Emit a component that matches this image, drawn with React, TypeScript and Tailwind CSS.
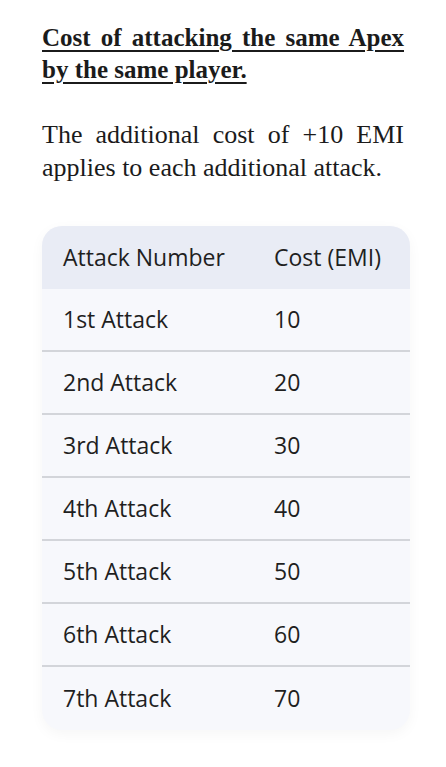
export default function App() {
  const rows = [
    ["1st Attack", "10"],
    ["2nd Attack", "20"],
    ["3rd Attack", "30"],
    ["4th Attack", "40"],
    ["5th Attack", "50"],
    ["6th Attack", "60"],
    ["7th Attack", "70"],
  ];

  return (
    <div className="min-h-[767px] bg-white px-[42px] pt-[22px] text-[#1b1b1b]">
      <h1 className="font-['Liberation_Serif',serif] text-[25px] font-bold leading-[32px] underline decoration-2 underline-offset-[4px]">
        <span className="block text-justify [text-align-last:justify]">Cost of attacking the same Apex</span>
        <span className="block">by the same player.</span>
      </h1>
      <p className="mt-[32px] font-['Liberation_Serif',serif] text-[26px] leading-[33px]">
        <span className="block text-justify [text-align-last:justify]">The additional cost of +10 EMI</span>
        <span className="block">applies to each additional attack.</span>
      </p>

      <div className="mt-[42px] w-[368px] overflow-hidden rounded-[20px] bg-[#f7f8fc] font-['Open_Sans',sans-serif] text-[23px] shadow-[0_4px_14px_rgba(0,0,0,0.04)]">
        <div className="flex h-[63px] items-center bg-[#e9ecf5] text-[#1f1f1f]">
          <div className="w-[232px] pl-[21px]">Attack Number</div>
          <div>Cost (EMI)</div>
        </div>
        {rows.map(([a, c], i) => (
          <div
            key={a}
            className={`flex h-[63px] items-center text-[#1f1f1f] ${i < rows.length - 1 ? "border-b-2 border-[#d3d5da]" : ""}`}
          >
            <div className="w-[232px] pl-[21px]">{a}</div>
            <div>{c}</div>
          </div>
        ))}
      </div>
    </div>
  );
}
